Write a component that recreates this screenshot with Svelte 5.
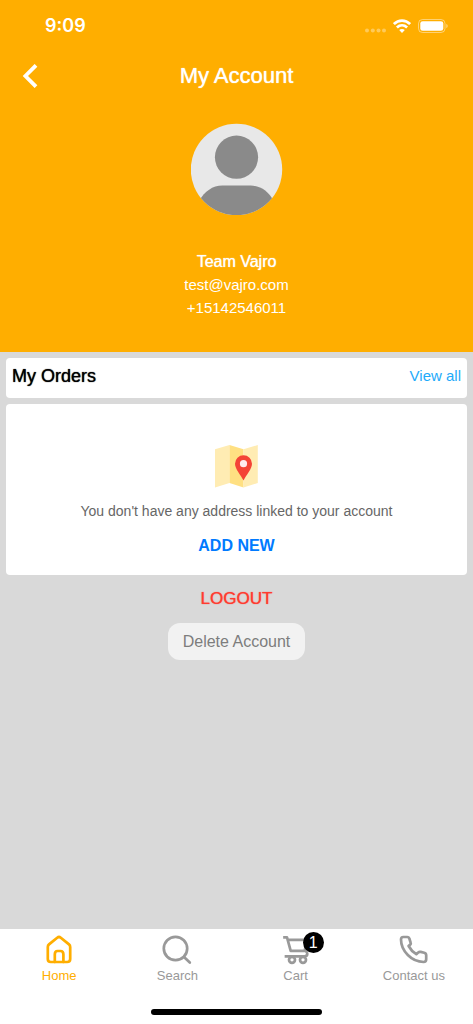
<script>
  const tabs = [
    { id: 'home', label: 'Home' },
    { id: 'search', label: 'Search' },
    { id: 'cart', label: 'Cart', count: 1 },
    { id: 'contact', label: 'Contact us' }
  ];
  let active = $state('home');
</script>

<div class="page">
  <header class="hero">
    <div class="status">
      <span class="time">9:09</span>
      <div class="signals">
        <svg width="21" height="5" viewBox="0 0 21 5" fill="#fff" opacity=".35" aria-hidden="true">
          <circle cx="2" cy="2.5" r="2" /><circle cx="7.8" cy="2.5" r="2" /><circle cx="13.5" cy="2.5" r="2" /><circle cx="19" cy="2.5" r="2" />
        </svg>
        <svg width="18" height="14" viewBox="0 0 18 14" fill="none" stroke="#fff" stroke-width="2.7" aria-hidden="true">
          <path d="M.9 5.1C5.5.5 12.5.5 17.1 5.1" />
          <path d="M3.9 8.4C6.9 5.6 11.1 5.6 14.1 8.4" />
          <path d="M9 13.9 6.2 11.1C7.8 9.6 10.2 9.6 11.8 11.1Z" fill="#fff" stroke="none" />
        </svg>
        <svg width="30" height="14" viewBox="0 0 30 14" aria-hidden="true">
          <rect x=".5" y=".5" width="26.5" height="13" rx="4" fill="none" stroke="#fff" opacity=".45" />
          <rect x="2.3" y="2.2" width="23" height="9.6" rx="2.4" fill="#fff" />
          <path d="M28.3 5C30.1 5.6 30.1 8.4 28.3 9Z" fill="#fff" opacity=".5" />
        </svg>
      </div>
    </div>
    <div class="titlebar">
      <button class="back" aria-label="Back">
        <svg width="16" height="24" viewBox="0 0 16 24" fill="none" stroke="#fff" stroke-width="3.8" aria-hidden="true"><path d="M14 1.3 3.4 12 14 22.7" /></svg>
      </button>
      <h1>My Account</h1>
    </div>
    <svg class="avatar" width="92" height="92" viewBox="0 0 92 92" aria-hidden="true">
      <clipPath id="face"><circle cx="45.5" cy="46.5" r="45.7" /></clipPath>
      <g clip-path="url(#face)">
        <rect width="92" height="92" fill="#e8e8e8" />
        <circle cx="45.5" cy="34.2" r="21.6" fill="#8a8a8a" />
        <path d="M8.5 92V77.5C13.5 68.5 21.5 62.5 31.5 62.5H59.5C69.5 62.5 77.5 68.5 82.5 77.5V92Z" fill="#8a8a8a" />
      </g>
    </svg>
    <p class="name">Team Vajro</p>
    <p class="detail">test@vajro.com</p>
    <p class="detail">+15142546011</p>
  </header>

  <main>
    <section class="card orders">
      <h2>My Orders</h2>
      <a href="#orders">View all</a>
    </section>
    <section class="card address">
      <svg width="44" height="44" viewBox="0 0 44 44" aria-hidden="true">
        <path d="M0 5.3 14.5 1V39L0 43.5Z" fill="#ffecb3" />
        <path d="M14.5 1 28.5 5.3V43.5L14.5 39Z" fill="#ffe082" />
        <path d="M28.5 5.3 42.8 1V39L28.5 43.5Z" fill="#ffecb3" />
        <path d="M28.5 36.5C25.8 31 20 25 20 19.7A8.5 8.5 0 0 1 37 19.7C37 25 31.2 31 28.5 36.5Z" fill="#f44336" />
        <circle cx="28.5" cy="19.7" r="3.6" fill="#ffebee" />
      </svg>
      <p>You don't have any address linked to your account</p>
      <button class="add">ADD NEW</button>
    </section>
    <button class="logout">LOGOUT</button>
    <button class="delete">Delete Account</button>
  </main>

  <footer>
    <nav>
      {#each tabs as tab}
        <button class="tab" class:active={active === tab.id} onclick={() => (active = tab.id)}>
          <span class="icon">
            <svg width="30" height="30" viewBox="0 0 30 30" fill="none" stroke="currentColor" stroke-width="2.7" stroke-linecap="round" stroke-linejoin="round" aria-hidden="true">
              {#if tab.id === 'home'}
                <path d="M13.2 2.7Q15 1.3 16.8 2.7L25 9.4Q26.2 10.4 26.2 12V24Q26.2 27 23.2 27H6.8Q3.8 27 3.8 24V12Q3.8 10.4 5 9.4Z" />
                <path d="M10.8 27V19.5Q10.8 16 13.5 16H16.5Q19.4 16 19.4 19.5V27" />
              {:else if tab.id === 'search'}
                <circle cx="13.5" cy="13.5" r="11.7" />
                <path d="M22 22 27.8 27.5" />
              {:else if tab.id === 'cart'}
                <path d="M3.5 2.3H6L9.7 15.8H23.6L26.3 4.8H7M5 21.3H23.6Q26.3 21.3 26.3 18.8 26.3 17 24.3 15.8" stroke-linecap="square" />
                <circle cx="11" cy="24.8" r="3" /><circle cx="22" cy="24.8" r="3" />
              {:else}
                <path d="M4.3 2H8.2Q10 2 10.5 4L11.7 7.9Q12.2 9.4 9.6 11Q12.3 16.1 17.3 19.2L19.2 17.5Q20.2 16.6 21.7 16.9L25.2 17.7Q27.2 18.2 27.2 20.2V24.3Q27.2 27 24.6 27C12.6 27 2 16 2 4.6Q2 2 4.3 2Z" />
              {/if}
            </svg>
            {#if tab.count}<span class="badge">{tab.count}</span>{/if}
          </span>
          <span>{tab.label}</span>
        </button>
      {/each}
    </nav>
    <div class="indicator"></div>
  </footer>
</div>

<style>
  :global(body) { margin: 0; }
  .page {
    min-height: 100vh;
    display: flex;
    flex-direction: column;
    background: #d9d9d9;
    font-family: "Liberation Sans", Arial, sans-serif;
  }
  h1, h2, p { margin: 0; font-weight: 400; }
  button { border: 0; padding: 0; background: none; font: inherit; color: inherit; cursor: pointer; }
  svg { display: block; }
  .hero {
    display: flex;
    flex-direction: column;
    align-items: center;
    background: #ffae00;
    color: #fff;
    padding-bottom: 33px;
  }
  .status {
    align-self: stretch;
    display: flex;
    justify-content: space-between;
    align-items: center;
    height: 52px;
    padding: 0 25px 0 45px;
  }
  .time { font: 600 18px/24px Inter, sans-serif; }
  .signals { display: flex; align-items: center; gap: 7px; }
  .signals svg:first-child { margin-top: 9px; }
  .titlebar {
    align-self: stretch;
    display: grid;
    grid-template-columns: 60px 1fr 60px;
    align-items: center;
    height: 48px;
    text-align: center;
  }
  .back { justify-self: start; padding-left: 22px; }
  h1 { font-size: 22px; line-height: 24px; text-shadow: 0 0 1px currentColor; }
  .avatar { margin: 23px 0 36px; }
  .name { font-size: 16px; line-height: 22px; text-shadow: 0 0 1px currentColor; }
  .detail { font-size: 15px; line-height: 23px; }
  main {
    flex: 1;
    display: flex;
    flex-direction: column;
    align-items: center;
    gap: 6px;
    padding: 6px;
  }
  .card { align-self: stretch; background: #fff; border-radius: 4px; }
  .orders {
    display: flex;
    justify-content: space-between;
    align-items: flex-start;
    padding: 6px 6px 10px;
  }
  h2 { font-size: 18px; line-height: 24px; color: #000; text-shadow: 0 0 1px currentColor; }
  .orders a { color: #1eaafa; font-size: 15px; line-height: 24px; text-decoration: none; }
  .address {
    display: flex;
    flex-direction: column;
    align-items: center;
    padding: 40px 6px 17px;
  }
  .address p { margin: 13px 0; color: #666; font-size: 14px; line-height: 20px; }
  .add { color: #007aff; font-size: 16px; font-weight: 700; line-height: 24px; }
  .logout { margin-top: 6px; color: #ff3b30; font-size: 17px; line-height: 24px; text-shadow: 0 0 1px currentColor; }
  .delete {
    margin-top: 6px;
    padding: 6px 15px;
    border-radius: 12px;
    background: #f2f2f2;
    color: #7d7d7d;
    font-size: 16px;
    line-height: 25px;
  }
  footer { background: #fff; padding-bottom: 9px; }
  nav { display: grid; grid-template-columns: repeat(4, 1fr); padding: 6px 0 25px; }
  .tab {
    display: flex;
    flex-direction: column;
    align-items: center;
    gap: 3px;
    color: #999;
    font-size: 13px;
    line-height: 16px;
  }
  .tab.active { color: #ffae00; }
  .icon { position: relative; }
  .badge {
    position: absolute;
    top: -3px;
    left: 22px;
    width: 21px;
    height: 21px;
    border-radius: 50%;
    background: #000;
    color: #fff;
    font-size: 16px;
    line-height: 21px;
    text-align: center;
  }
  .indicator { width: 36%; height: 6px; margin: 0 auto; border-radius: 3px; background: #000; }
</style>
